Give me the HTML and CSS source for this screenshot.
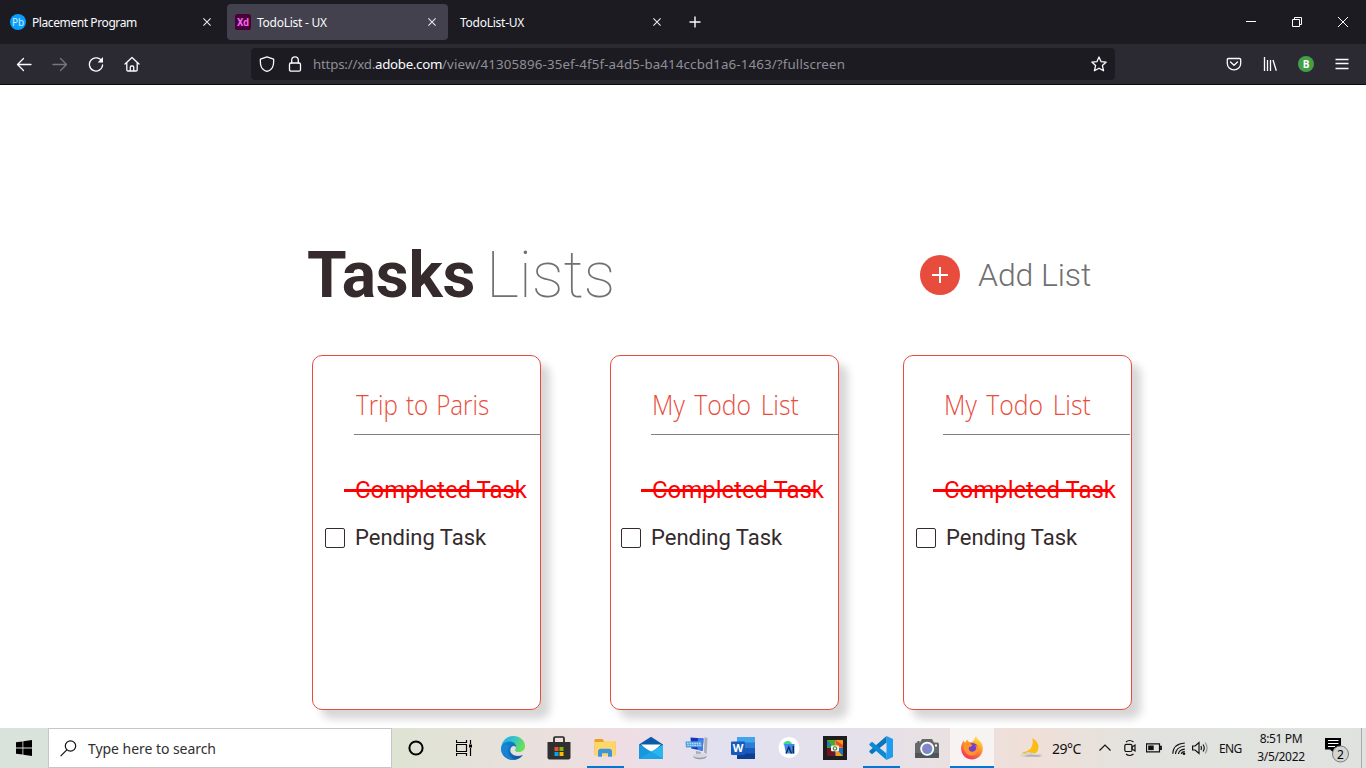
FILE: index.html
```html
<!DOCTYPE html>
<html lang="en">
<head>
<meta charset="utf-8">
<title>TodoList - UX</title>
<link rel="stylesheet" href="styles.css">
</head>
<body>
<div class="screen">
  <header class="tabs">
    <div class="tab tab-first">
      <svg class="fav" viewBox="0 0 16 16"><circle cx="8" cy="8" r="8" fill="#0b9dfb"/><text x="8" y="11.6" class="fav-pb">Pb</text></svg>
      <span class="tab-name n1">Placement Program</span>
      <svg class="x" viewBox="0 0 8 8"><path d="M.4.4l7.2 7.2M7.6.4L.4 7.6"/></svg>
    </div>
    <div class="tab tab-active">
      <svg class="fav" viewBox="0 0 16 16"><rect width="16" height="16" rx="2.6" fill="#470137"/><text x="8" y="11.6" class="fav-xd">Xd</text></svg>
      <span class="tab-name n2">TodoList - UX</span>
      <svg class="x" viewBox="0 0 8 8"><path d="M.4.4l7.2 7.2M7.6.4L.4 7.6"/></svg>
    </div>
    <div class="tab tab-last">
      <span class="tab-name n3">TodoList-UX</span>
      <svg class="x" viewBox="0 0 8 8"><path d="M.4.4l7.2 7.2M7.6.4L.4 7.6"/></svg>
    </div>
    <svg class="plus" viewBox="0 0 12 12"><path d="M6 .5v11M.5 6h11"/></svg>
    <div class="win">
      <svg width="10" height="10" viewBox="0 0 10 10"><path d="M0 4.5h10"/></svg>
      <svg width="10" height="10" viewBox="0 0 10 10"><path d="M.5 2.5h7v7h-7zM2.5 2.5v-2h7v7h-2"/></svg>
      <svg width="10" height="10" viewBox="0 0 10 10"><path d="M0 0l10 10M10 0L0 10"/></svg>
    </div>
  </header>

  <nav class="toolbar">
    <div class="nav-icons">
      <svg viewBox="0 0 16 16"><path d="M15 8.5H1.5M7.5 2.5l-6 6 6 6"/></svg>
      <svg class="dim" viewBox="0 0 16 16"><path d="M1 8.5h13.5M8.5 2.5l6 6-6 6"/></svg>
      <svg viewBox="0 0 16 16"><path d="M14 5.6A6.6 6.6 0 1 0 14.6 9"/><path class="solid" d="M15 1v5.6H9.6z"/></svg>
      <svg viewBox="0 0 16 16"><path d="M1 8l7-6.5L15 8M2.8 6.6v7.2q0 1.2 1.2 1.2h8q1.2 0 1.2-1.2V6.6M6.3 15v-4q0-1 1-1h1.400q1 0 1 1v4"/></svg>
    </div>
    <div class="address">
      <svg class="a-icon" viewBox="0 0 16 16"><path d="M8 .8l6.6 2.300q.4 7.400-2.400 10-1.600 1.600-4.200 2.300-2.600-.7-4.200-2.300Q1 10.500 1.400 3.100z"/></svg>
      <svg class="a-icon lock" viewBox="0 0 16 16"><rect x="2.500" y="7" width="11" height="8.200" rx="1.400"/><path d="M4.700 7V4.200a3.300 3.300 0 0 1 6.600 0V7"/></svg>
      <span class="url"><span class="scheme">https://xd.</span><b>adobe.com</b>/view/41305896-35ef-4f5f-a4d5-ba414ccbd1a6-1463/?fullscreen</span>
      <svg class="a-icon star" viewBox="0 0 16 16"><path d="M8 1l2 4.600 5.200.5-3.800 3.500 1.200 5.200L8 12.200l-4.600 2.600 1.200-5.200L.8 6.100 6 5.600z"/></svg>
    </div>
    <div class="tools">
      <svg viewBox="0 0 16 16"><path d="M2.500 2.500h11q1.200 0 1.200 1.200V7.500a6.700 6.300 0 0 1-13.400 0V3.700q0-1.200 1.200-1.200zM4.500 6L8 9.200 11.500 6"/></svg>
      <svg class="library" viewBox="0 0 16 16"><path d="M2.500 1v14M5.500 4v11M8.500 4v11M11 4l3.300 10.700"/></svg>
      <svg viewBox="0 0 16 16"><circle class="avatar" cx="8" cy="8" r="8"/><text x="8" y="11.500" class="avatar-letter">B</text></svg>
      <svg class="menu" viewBox="0 0 16 16"><path d="M1.500 3.500h13M1.500 7.500h13M1.500 12.500h13"/></svg>
    </div>
  </nav>

  <main class="page">
    <div class="headline">
      <h1><span class="bold">Tasks</span><span class="thin">Lists</span></h1>
      <div class="add">
        <svg class="add-icon" viewBox="0 0 40 40"><circle cx="20" cy="20" r="20" fill="#e84c3d"/><path d="M20 12v16M12 20h16" stroke="#fff" stroke-width="2"/></svg>
        <span class="add-label">Add List</span>
      </div>
    </div>
    <div class="cards">
      <section class="card c1">
        <h2><span>Trip to Paris</span></h2>
        <div class="done"><span>Completed Task</span></div>
        <div class="pending"><i class="box"></i><span>Pending Task</span></div>
      </section>
      <section class="card c2">
        <h2><span>My Todo List</span></h2>
        <div class="done"><span>Completed Task</span></div>
        <div class="pending"><i class="box"></i><span>Pending Task</span></div>
      </section>
      <section class="card c3">
        <h2><span>My Todo List</span></h2>
        <div class="done"><span>Completed Task</span></div>
        <div class="pending"><i class="box"></i><span>Pending Task</span></div>
      </section>
    </div>
  </main>

  <footer class="taskbar">
    <div class="start"><svg width="16" height="16" viewBox="0 0 16 16"><path d="M0 2.300l6.500-.9v6.200H0zM7.300 1.300L16 0v7.600H7.300zM0 8.400h6.500v6.200L0 13.700zM7.300 8.400H16V16l-8.700-1.200z"/></svg></div>
    <div class="search">
      <svg width="17" height="17" viewBox="0 0 17 17"><circle cx="10.500" cy="6" r="5.200"/><path d="M6.800 9.800L.6 16.200"/></svg>
      <span>Type here to search</span>
    </div>
    <div class="slot narrow"><svg width="16" height="16" viewBox="0 0 16 16"><circle cx="8" cy="8" r="6.600" fill="none" stroke="#000" stroke-width="2"/></svg></div>
    <div class="slot narrow"><svg width="16" height="16" viewBox="0 0 16 16"><path d="M.5 0v2.500h10V0M.5 16v-2.500h10V16M.5 4.500h10v7H.5zM14.500 0v4M14.500 8v8" fill="none" stroke="#000" stroke-width="1.200"/><path d="M13 4.500h3v3h-3z"/></svg></div>
    <div class="apps">
      <div class="slot"><svg width="24" height="24" viewBox="0 0 24 24">
        <defs><linearGradient id="edgeTop" x1="0" y1="0" x2="1" y2=".35"><stop offset="0" stop-color="#21a4e8"/><stop offset=".5" stop-color="#2fc3cf"/><stop offset="1" stop-color="#68df58"/></linearGradient><linearGradient id="edgeLow" x1="0" y1="0" x2="1" y2="1"><stop offset="0" stop-color="#1689d8"/><stop offset="1" stop-color="#0c4f9e"/></linearGradient></defs>
        <path d="M.3 11C1 4.500 6 0 12.300 0 19 0 24 4.500 24 10c0 4-3 6-6.500 6-2.800 0-4-1.200-3.200-2.600 1.500-2.800-.6-5.900-4-5.900C5.500 7.500 1.500 9 .3 11z" fill="url(#edgeTop)"/>
        <path d="M.1 12C.5 7.800 4.500 5.600 8.500 5.600c4 0 6.500 2.500 6.600 5.400C13 8.800 9.500 10.500 9.300 14c-.2 4.700 6.200 7.800 12.700 4.700C19.500 22.500 15.800 24 12 24 5 24-.4 18.500.1 12z" fill="url(#edgeLow)"/>
        <path d="M8.600 9.500C5.700 12 6 21 14.500 23.600 8 25 0 20.500.1 12 1.500 9 5.500 8 8.600 9.500z" fill="#1a8ad8" opacity=".75"/></svg></div>
      <div class="slot"><svg width="24" height="24" viewBox="0 0 24 24"><path d="M7 7V2.200Q7 1 8.200 1h7.600Q17 1 17 2.200V7" fill="none" stroke="#222" stroke-width="1.700"/><path d="M.5 6h23v15.500q0 2-2 2h-19q-2 0-2-2z" fill="#303030"/><path d="M7.500 11H11.500v4H7.500z" fill="#f25022"/><path d="M12.500 11h4v4h-4z" fill="#7fba00"/><path d="M7.500 16h4v4h-4z" fill="#00a4ef"/><path d="M12.500 16h4v4h-4z" fill="#ffb900"/></svg></div>
      <div class="slot open"><svg width="24" height="24" viewBox="0 0 24 24"><path d="M1.500 3.800Q1.500 3 2.500 3h7l1.800 2.500h10.200q1 0 1 1V19h-21z" fill="#e9a31b"/><path d="M1.500 6h8L11.500 5h11v14q0 1-1 1h-19q-1 0-1-1z" fill="#ffd66b"/><path d="M5 20.700v-5q0-3 3-3h8q3 0 3 3v5h-4v-3.500H9v3.500z" fill="#3b96dd"/></svg></div>
      <div class="slot"><svg width="24" height="24" viewBox="0 0 24 24"><path d="M0 8.500L12 .8l12 7.700V18H0z" fill="#0b5ca8"/><path d="M2 8.500h20L16 14 12 16 8 14z" fill="#fff"/><path d="M0 8.500l12 7.300 12-7.300V23H0z" fill="#28b5f0"/><path d="M0 8.500L24 23H1q-1 0-1-1z" fill="#1698de"/><path d="M0 23l12-7.300L24 23z" fill="#20a3e5"/></svg></div>
      <div class="slot"><svg width="24" height="24" viewBox="0 0 24 24"><path d="M4 .3l15 .9q1 0 1.100 1L19 16.500 5.500 14z" fill="#dfe3ea"/><path d="M5.500 1.500l13 .9-.9 12.400-11.300-2.300z" fill="#1733bb"/><path d="M13 2l5.500.4-.9 12.400-5-1z" fill="#4778e8"/><path d="M19.500 1.300l3 .7-.8 16-2.700-1.500z" fill="#aab0bb"/><path d="M11 15l5 1v3l-5-.7z" fill="#a5acb5"/><ellipse cx="15" cy="20" rx="7.300" ry="2.600" fill="#d5d8de"/><path d="M8 20.200q6 3 14 0-1 3-7 3-6-.2-7-3z" fill="#949aa4"/><path d="M.5 5.500l16-.3 1 5.800-16.600.5z" fill="#4ba0df"/><path d="M2 7.300h14M2.300 9.300h13.500" stroke="#e1f3ff" stroke-width="1.100" stroke-dasharray="1.500 .9"/></svg></div>
      <div class="slot"><svg width="24" height="24" viewBox="0 0 24 24"><path d="M6 1h18v6H6z" fill="#41a5ee"/><path d="M6 6.500h18v6H6z" fill="#2b7cd3"/><path d="M6 12h18v6H6z" fill="#185abd"/><path d="M6 17.500h18V23H6z" fill="#103f91"/><rect y="5.500" width="14" height="13.500" rx="1" fill="#185abd"/><text x="7" y="16" class="word-letter">W</text></svg></div>
      <div class="slot"><svg width="24" height="24" viewBox="0 0 24 24"><circle cx="12" cy="11.500" r="10.500" fill="#fff"/><path d="M6.300 8.500q.5-3.500 4.500-3.600 3.700.1 4.200 3.600z" fill="#3ddc84"/><path d="M7 8h10.500v9.500H9z" fill="#4285f4"/><path d="M9 17.500l2.800-6.500 2.700 6.500M16.300 10v7.500" fill="none" stroke="#083042" stroke-width="1.400"/></svg></div>
      <div class="slot"><svg width="24" height="24" viewBox="0 0 24 24"><path d="M0 0h24v24H0z" fill="#1e1e1e"/><path d="M4 4h8v8H4z" fill="#2f9e42"/><path d="M12 4h8v8h-8z" fill="#f49622"/><path d="M4 12h8v8H4z" fill="#711323"/><path d="M12 12h8v8h-8z" fill="#246ec1"/><path d="M4 4l8 8V4z" fill="#4aa832"/><path d="M4 4v5l6 3z" fill="#2677c9"/><path d="M12 4l2 6 6 2V9z" fill="#e44e21"/><path d="M12 12l1 8h7z" fill="#f0a020"/><rect x="8" y="9.500" width="8" height="5.800" rx="1" fill="#f5f5df"/><circle cx="12" cy="12.400" r="2.200" fill="#3c7d49"/><circle cx="12" cy="12.400" r="1.100" fill="#fff"/></svg></div>
      <div class="slot open"><svg width="24" height="24" viewBox="0 0 24 24"><path d="M17.500 0L24 3v18l-6.500 3z" fill="#1f9cf0"/><path d="M17.500 0v6.600L3 18.200.3 16V15z" fill="#0876bb"/><path d="M17.500 24v-6.600L3 5.800.3 8v1z" fill="#0b8bd5"/></svg></div>
      <div class="slot"><svg width="24" height="24" viewBox="0 0 24 24"><path d="M7 3h10l2 3.500h3.500q1.500 0 1.500 1.500v13q0 1-1 1H1q-1 0-1-1V8q0-1.500 1.500-1.500H5z" fill="#65696c"/><path d="M0 17h24v4q0 1-1 1H1q-1 0-1-1z" fill="#505558"/><path d="M2.500 5h2v2h-2z" fill="#555b60"/><path d="M20 8.500h2v2h-2z" fill="#fff"/><circle cx="12.200" cy="12.800" r="7" fill="#fff"/><circle cx="12.200" cy="12.800" r="5.200" fill="url(#lens)"/><defs><linearGradient id="lens" x1="0" y1="0" x2="1" y2="1"><stop offset="0" stop-color="#5f9dd6"/><stop offset=".5" stop-color="#947cc4"/><stop offset="1" stop-color="#3caed7"/></linearGradient></defs></svg></div>
      <div class="slot open active"><svg width="24" height="24" viewBox="0 0 24 24"><defs><linearGradient id="fire" x1=".8" y1="0" x2=".3" y2="1"><stop offset="0" stop-color="#fff04b"/><stop offset=".4" stop-color="#ffa02a"/><stop offset="1" stop-color="#f42b5e"/></linearGradient></defs><path d="M16 0c.8 3 3.600 4 5 6.500 2.500 3.500 2.500 10-1 13.500-5 5.200-13.500 4.300-17-1.200C-.2 13.700 1 8.500 3.500 4.500L5 7l2-3.500L9 6h3c2.500-1.500 2.500-4 4-6z" fill="url(#fire)"/><circle cx="12.500" cy="12.500" r="5.500" fill="#7540c9"/><path d="M4 8q3-2.500 5.500-.5l3 1.600q-1 2-3.500 2.200c-1 3.500 2 5 4.500 4.200 3-.8 3.600-4 1.500-6.500 3 .5 4.500 4 3 7-2 4-8.500 5-12 1C3.500 14 3 10.500 4 8z" fill="#ff942c"/></svg></div>
    </div>
    <div class="weather"><svg width="24" height="22" viewBox="0 0 24 22"><path d="M12.500 1q6 3.500 6 9.500-.5 7-9 7.500-5 .5-7.500-3Q9 15 11.500 10 13.500 5.500 12.500 1z" fill="#fbbd14"/><path d="M2 20q-2-.5-1-2.500 1.800-2 4.500-1 2.500-2.500 6-.5 2.200-1 3.500 1l4.500-.2q3 .4 3.300 1.700-.2 1.200-2 1.500z" fill="#d8d5d3"/><path d="M4 19.500q5-3 10-1.500l7 .2-2 1.600z" fill="#b5afad"/></svg><span>29°C</span></div>
    <svg class="tray chevron" width="12" height="8" viewBox="0 0 12 8"><path d="M.5 6.500L6 1l5.500 5.500"/></svg>
    <svg class="tray meet" width="12" height="18" viewBox="0 0 12 18"><path d="M2 3q3.500-3 7.500 0M2 15q3.500 3 7.500 0"/><rect x=".8" y="5.300" width="7.200" height="7.200" rx="1.500"/><path d="M8 8l3-2v6L8 10z"/></svg>
    <svg class="tray battery" width="16" height="10" viewBox="0 0 16 10"><path d="M.5.8h13v8H.5zM14 3.300h1.300v3H14z"/><path class="ink" d="M2.200 2.500h5.500v4.600H2.200z"/></svg>
    <svg class="tray wifi" width="14" height="14" viewBox="0 0 14 14"><path d="M.8 12.800Q1 3 12.800 2M3.500 13Q4 6 12.800 5M6.500 13Q7 8.800 12.800 8.200M9.300 13q.4-2 3.500-2.300"/><circle class="ink" cx="12" cy="12.700" r="1.300"/></svg>
    <svg class="tray sound" width="17" height="14" viewBox="0 0 17 14"><path d="M.6 5h2.500L7 1.500v11L3.100 9H.6zM9 5q1 2 0 4"/><path d="M11 3.500q2.500 3.500 0 7"/><path class="faint" d="M13.200 1.700q3.800 5.300 0 10.600"/></svg>
    <span class="lang">ENG</span>
    <div class="clock"><span class="time">8:51 PM</span><span class="date">3/5/2022</span></div>
    <div class="notify"><svg width="26" height="28" viewBox="0 0 26 28"><path d="M0 1h16v11.500H8.500v3L5 12.500H0z"/><path d="M3 3.500h10.500M3 6.500h10.500M3 9.500h7" stroke="#fff" stroke-width="1"/><circle cx="15.500" cy="17" r="8" fill="#d2d5d3" stroke="#777b7a"/><text x="15.500" y="21.500" class="count">2</text></svg></div>
    <div class="peek"></div>
  </footer>
</div>
</body>
</html>
```

FILE: styles.css
```css
* { box-sizing: border-box; }
body { margin: 0; background: #fff; font-family: "Noto Sans", "Open Sans", sans-serif; }
svg { display: block; flex: none; }
.screen { display: flex; flex-direction: column; width: 1366px; height: 768px; overflow: hidden; }

.tabs { display: flex; align-items: center; flex: none; height: 44px; background: #1c1b22; color: #fbfbfe; font-size: 12px; }
.tab { display: flex; align-items: center; width: 221px; height: 36px; padding: 0 12px 0 8px; border-radius: 4px; white-space: nowrap; }
.tab-first { margin-left: 2px; }
.tab-active { margin-left: 4px; background: #42414d; }
.tab-last { margin-left: 4px; }
.fav { width: 16px; height: 16px; margin-right: 6px; }
.fav-pb { font: 10px "Noto Sans", sans-serif; fill: #c7ecff; text-anchor: middle; }
.fav-xd { font: bold 10px Roboto, sans-serif; fill: #ff61f6; text-anchor: middle; }
.tab-name { flex: 1; padding-top: 1px; }
.n1 { letter-spacing: -.41px; }
.n2, .n3 { letter-spacing: -.25px; }
.x { width: 8px; height: 8px; fill: none; stroke: #e8e8ee; stroke-width: 1.1; }
.plus { width: 12px; height: 12px; margin-left: 16px; fill: none; stroke: #fbfbfe; stroke-width: 1.4; }
.win { display: flex; gap: 36px; margin-left: auto; margin-right: 18px; }
.win svg { fill: none; stroke: #fff; stroke-width: 1; }

.toolbar { display: flex; align-items: center; flex: none; height: 41px; border-bottom: 1px solid #0c0c0d; background: #2b2a33; }
.nav-icons { display: flex; gap: 20px; width: 251px; padding-left: 16px; }
.nav-icons svg, .a-icon, .tools svg { width: 16px; height: 16px; fill: none; stroke: #fbfbfe; stroke-width: 1.3; stroke-linejoin: round; stroke-linecap: round; }
.nav-icons .dim { stroke: #77767e; }
.nav-icons .solid { fill: #fbfbfe; stroke: none; }
.address { display: flex; align-items: center; width: 864px; height: 32px; padding: 0 8px; border-radius: 4px; background: #1c1b22; }
.lock { margin-left: 12px; }
.url { margin-left: 10px; padding-bottom: 1px; color: #8f8f97; font-size: 13.3px; font-weight: 400; letter-spacing: .14px; white-space: nowrap; }
.scheme { display: inline-block; width: 62px; letter-spacing: -.2px; }
.url b { display: inline-block; width: 67px; color: #fbfbfe; font-weight: 400; letter-spacing: -.3px; }
.star { margin-left: auto; }
.tools { display: flex; gap: 20px; margin-left: auto; margin-right: 16px; }
.tools .avatar { fill: #43a047; stroke: none; }
.tools .library, .tools .menu { stroke-linecap: butt; }
.tools .avatar-letter { font: bold 10px "Open Sans", sans-serif; fill: #fff; stroke: none; text-anchor: middle; }

.page { flex: 1; min-height: 0; padding: 150px 0 0; overflow: hidden; font-family: Roboto, sans-serif; }
.headline { display: flex; align-items: center; height: 80px; padding-left: 307px; }
h1 { display: flex; width: 613px; margin: 0; padding-top: 2px; font-size: 64px; line-height: 80px; font-weight: 400; color: #352a2c; white-space: nowrap; }
.bold { width: 179px; font-weight: 700; letter-spacing: -.2px; }
.thin { font-weight: 100; color: #707070; letter-spacing: -.2px; }
.add { display: flex; align-items: center; gap: 18px; }
.add-icon { width: 40px; height: 40px; }
.add-label { color: #707070; font-size: 32px; font-weight: 300; line-height: 40px; letter-spacing: -.1px; white-space: nowrap; }

.cards { display: flex; margin-top: 40px; padding-left: 312px; }
.card { width: 229px; height: 355px; border: 1px solid #e84c3d; border-radius: 10px; background: #fff; box-shadow: 9px 9px 9px rgba(0, 0, 0, .16); white-space: nowrap; }
.c1 { --line: 41px; --title: 2px; --box: 12px; --gap: 10px; --squeeze: .863; --words: 2px; }
.c2 { --line: 40px; --title: 1px; --box: 10px; --gap: 10px; --squeeze: .885; --words: 3.5px; margin-left: 69px; }
.c3 { --line: 39px; --title: 1px; --box: 12px; --gap: 10px; --squeeze: .885; --words: 3.5px; margin-left: 64px; }
h2 { width: 187px; height: 79px; margin: 0 0 0 var(--line); padding: 28px 0 0 var(--title); border-bottom: 1px solid #808080; color: #e84c3d; font: 300 28px/40px "Open Sans", sans-serif; }
h2 span { display: inline-block; transform: scaleX(var(--squeeze)); transform-origin: 0 50%; word-spacing: var(--words); }
.done { position: relative; height: 30px; margin: 40px 0 0 calc(var(--line) - 10px); padding-left: 11px; color: #f00; font-size: 24px; line-height: 30px; letter-spacing: -.05px; }
.done::after { content: ""; position: absolute; left: 0; top: 14px; width: 176px; height: 3px; background: #f00; }
.pending { display: flex; align-items: center; height: 30px; margin-top: 18px; padding-left: var(--box); gap: var(--gap); color: #352a2c; font-size: 22px; line-height: 30px; }
.box { width: 20px; height: 20px; border: 1px solid #352a2c; border-radius: 2px; }

.taskbar { display: flex; align-items: center; flex: none; height: 40px; background: linear-gradient(90deg, #d9e3dc 0, #dfe3d4 30%, #ecdfdf 42%, #efdde4 46%, #e3e1ef 52%, #e4e1ec 62%, #ebe0df 71%, #f0dfd8 75%, #e2e3df 84%, #dfe2df 100%); color: #111; }
.start { display: flex; justify-content: center; width: 48px; }
.search { display: flex; align-items: center; gap: 11px; width: 344px; height: 40px; padding-left: 11px; border: 1px solid #c6c6c8; background: #fff; color: #303030; font-size: 14px; letter-spacing: -.05px; white-space: nowrap; }
.search svg { fill: none; stroke: #111; stroke-width: 1.2; }
.slot { display: flex; align-items: center; justify-content: center; width: 46px; height: 40px; }
.narrow { width: 48px; }
.apps { display: flex; margin-left: 2px; }
.open { background: linear-gradient(#0078d7, #0078d7) 50% 100% / 37px 2px no-repeat; }
.active { width: 44px; background: linear-gradient(#0078d7, #0078d7) 0 100% / 100% 2px no-repeat, #f7f3f2; }
.word-letter { font: bold 11px "Open Sans", sans-serif; fill: #fff; text-anchor: middle; }
.weather { display: flex; align-items: center; gap: 8px; width: 106px; padding-left: 26px; font-size: 14px; letter-spacing: -.5px; }
.tray { fill: none; stroke: #111; stroke-width: 1.2; }
.ink { fill: #111; stroke: none; }
.faint { stroke: #999; }
.chevron { margin-left: -1px; }
.meet { margin-left: 13px; }
.battery { margin-left: 10px; }
.wifi { margin-left: 10px; }
.sound { margin-left: 6px; }
.lang { width: 26px; margin-left: 10px; font-size: 12px; letter-spacing: -.6px; }
.clock { display: flex; flex-direction: column; align-items: center; width: 56px; margin-left: 8px; font-size: 12px; line-height: 18px; letter-spacing: -.35px; white-space: nowrap; }
.notify { margin-left: 16px; padding-top: 5px; }
.count { font: 12px "Noto Sans", sans-serif; text-anchor: middle; }
.peek { width: 5px; height: 40px; margin-left: auto; border-left: 1px solid #aaa; }
```
